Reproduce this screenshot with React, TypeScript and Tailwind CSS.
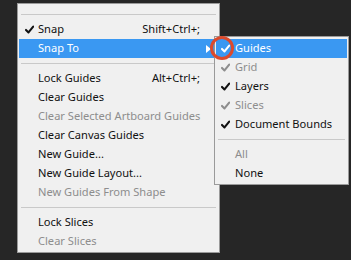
import React from "react";

const Check = ({ color }: { color: string }) => (
  <svg width="9" height="9" viewBox="0 0 9 9" className="shrink-0">
    <path d="M1 4.9 L3.5 7.4 L8.2 1.6" fill="none" stroke={color} strokeWidth="2.1" strokeLinecap="round" strokeLinejoin="round" />
  </svg>
);

type Item = { label: string; shortcut?: string; check?: boolean; disabled?: boolean };

const Sep = () => (
  <div className="h-[11px] flex items-center px-[2px]">
    <div className="h-px w-full bg-[#c9c9c9]" />
  </div>
);

const Row = ({ it, checkColor, col }: { it: Item; checkColor?: string; col: number }) => {
  const text = it.disabled ? "text-[#8d8d8d]" : "text-[#111]";
  return (
    <div className="h-[19px] flex items-center">
      <div className={`${col === 18 ? "w-[18px] pl-[5px]" : "w-[19px] pl-[5px]"} flex`}>
        {it.check && <Check color={checkColor || "#111"} />}
      </div>
      <span className={text}>{it.label}</span>
      <span className="flex-1" />
      {it.shortcut && <span className={`${text} mr-[18px]`}>{it.shortcut}</span>}
    </div>
  );
};

export default function App() {
  const font = { fontFamily: '"Noto Sans", "Open Sans", sans-serif' };
  return (
    <div className="relative w-[351px] h-[260px] bg-[#262626] overflow-hidden text-[11.1px]" style={font}>
      {/* main menu */}
      <div className="absolute left-[17px] top-[3px] w-[203px] bg-[#f0f0f0] border border-[#9a9a9a] pt-[5px] pb-[1px] px-[1px]">
        <Sep />
        <div className="pl-[1px]">
          <Row col={18} it={{ label: "Snap", shortcut: "Shift+Ctrl+;", check: true }} />
        </div>
        <div className="h-[19px] flex items-center bg-[#3a98f2] pl-[19px]">
          <span className="text-white">Snap To</span>
          <span className="flex-1" />
          <svg width="5" height="8" viewBox="0 0 5 8" className="mr-[7px]">
            <path d="M0 0 L5 4 L0 8 Z" fill="#fff" />
          </svg>
        </div>
        <Sep />
        <div className="pl-[1px]">
          <Row col={18} it={{ label: "Lock Guides", shortcut: "Alt+Ctrl+;" }} />
          <Row col={18} it={{ label: "Clear Guides" }} />
          <Row col={18} it={{ label: "Clear Selected Artboard Guides", disabled: true }} />
          <Row col={18} it={{ label: "Clear Canvas Guides" }} />
          <Row col={18} it={{ label: "New Guide..." }} />
          <Row col={18} it={{ label: "New Guide Layout..." }} />
          <Row col={18} it={{ label: "New Guides From Shape", disabled: true }} />
        </div>
        <Sep />
        <div className="pl-[1px]">
          <Row col={18} it={{ label: "Lock Slices" }} />
          <Row col={18} it={{ label: "Clear Slices", disabled: true }} />
        </div>
      </div>

      {/* submenu */}
      <div className="absolute left-[214px] top-[36px] w-[135px] bg-[#f0f0f0] border border-[#9a9a9a] pt-[2px] pb-[1px] px-[1px]">
        <div className="h-[19px] flex items-center bg-[#3a98f2]">
          <div className="w-[19px] pl-[5px] flex"><Check color="#fff" /></div>
          <span className="text-white">Guides</span>
        </div>
        <Row col={19} it={{ label: "Grid", check: true, disabled: true }} checkColor="#8d8d8d" />
        <Row col={19} it={{ label: "Layers", check: true }} />
        <Row col={19} it={{ label: "Slices", check: true, disabled: true }} checkColor="#8d8d8d" />
        <Row col={19} it={{ label: "Document Bounds", check: true }} />
        <Sep />
        <Row col={19} it={{ label: "All", disabled: true }} />
        <Row col={19} it={{ label: "None" }} />
      </div>

      {/* red highlight circle */}
      <svg className="absolute left-[209px] top-[35px]" width="26" height="26" viewBox="0 0 26 26">
        <circle cx="13" cy="13" r="10.5" fill="none" stroke="#dc4a2c" strokeWidth="3" />
      </svg>
    </div>
  );
}
